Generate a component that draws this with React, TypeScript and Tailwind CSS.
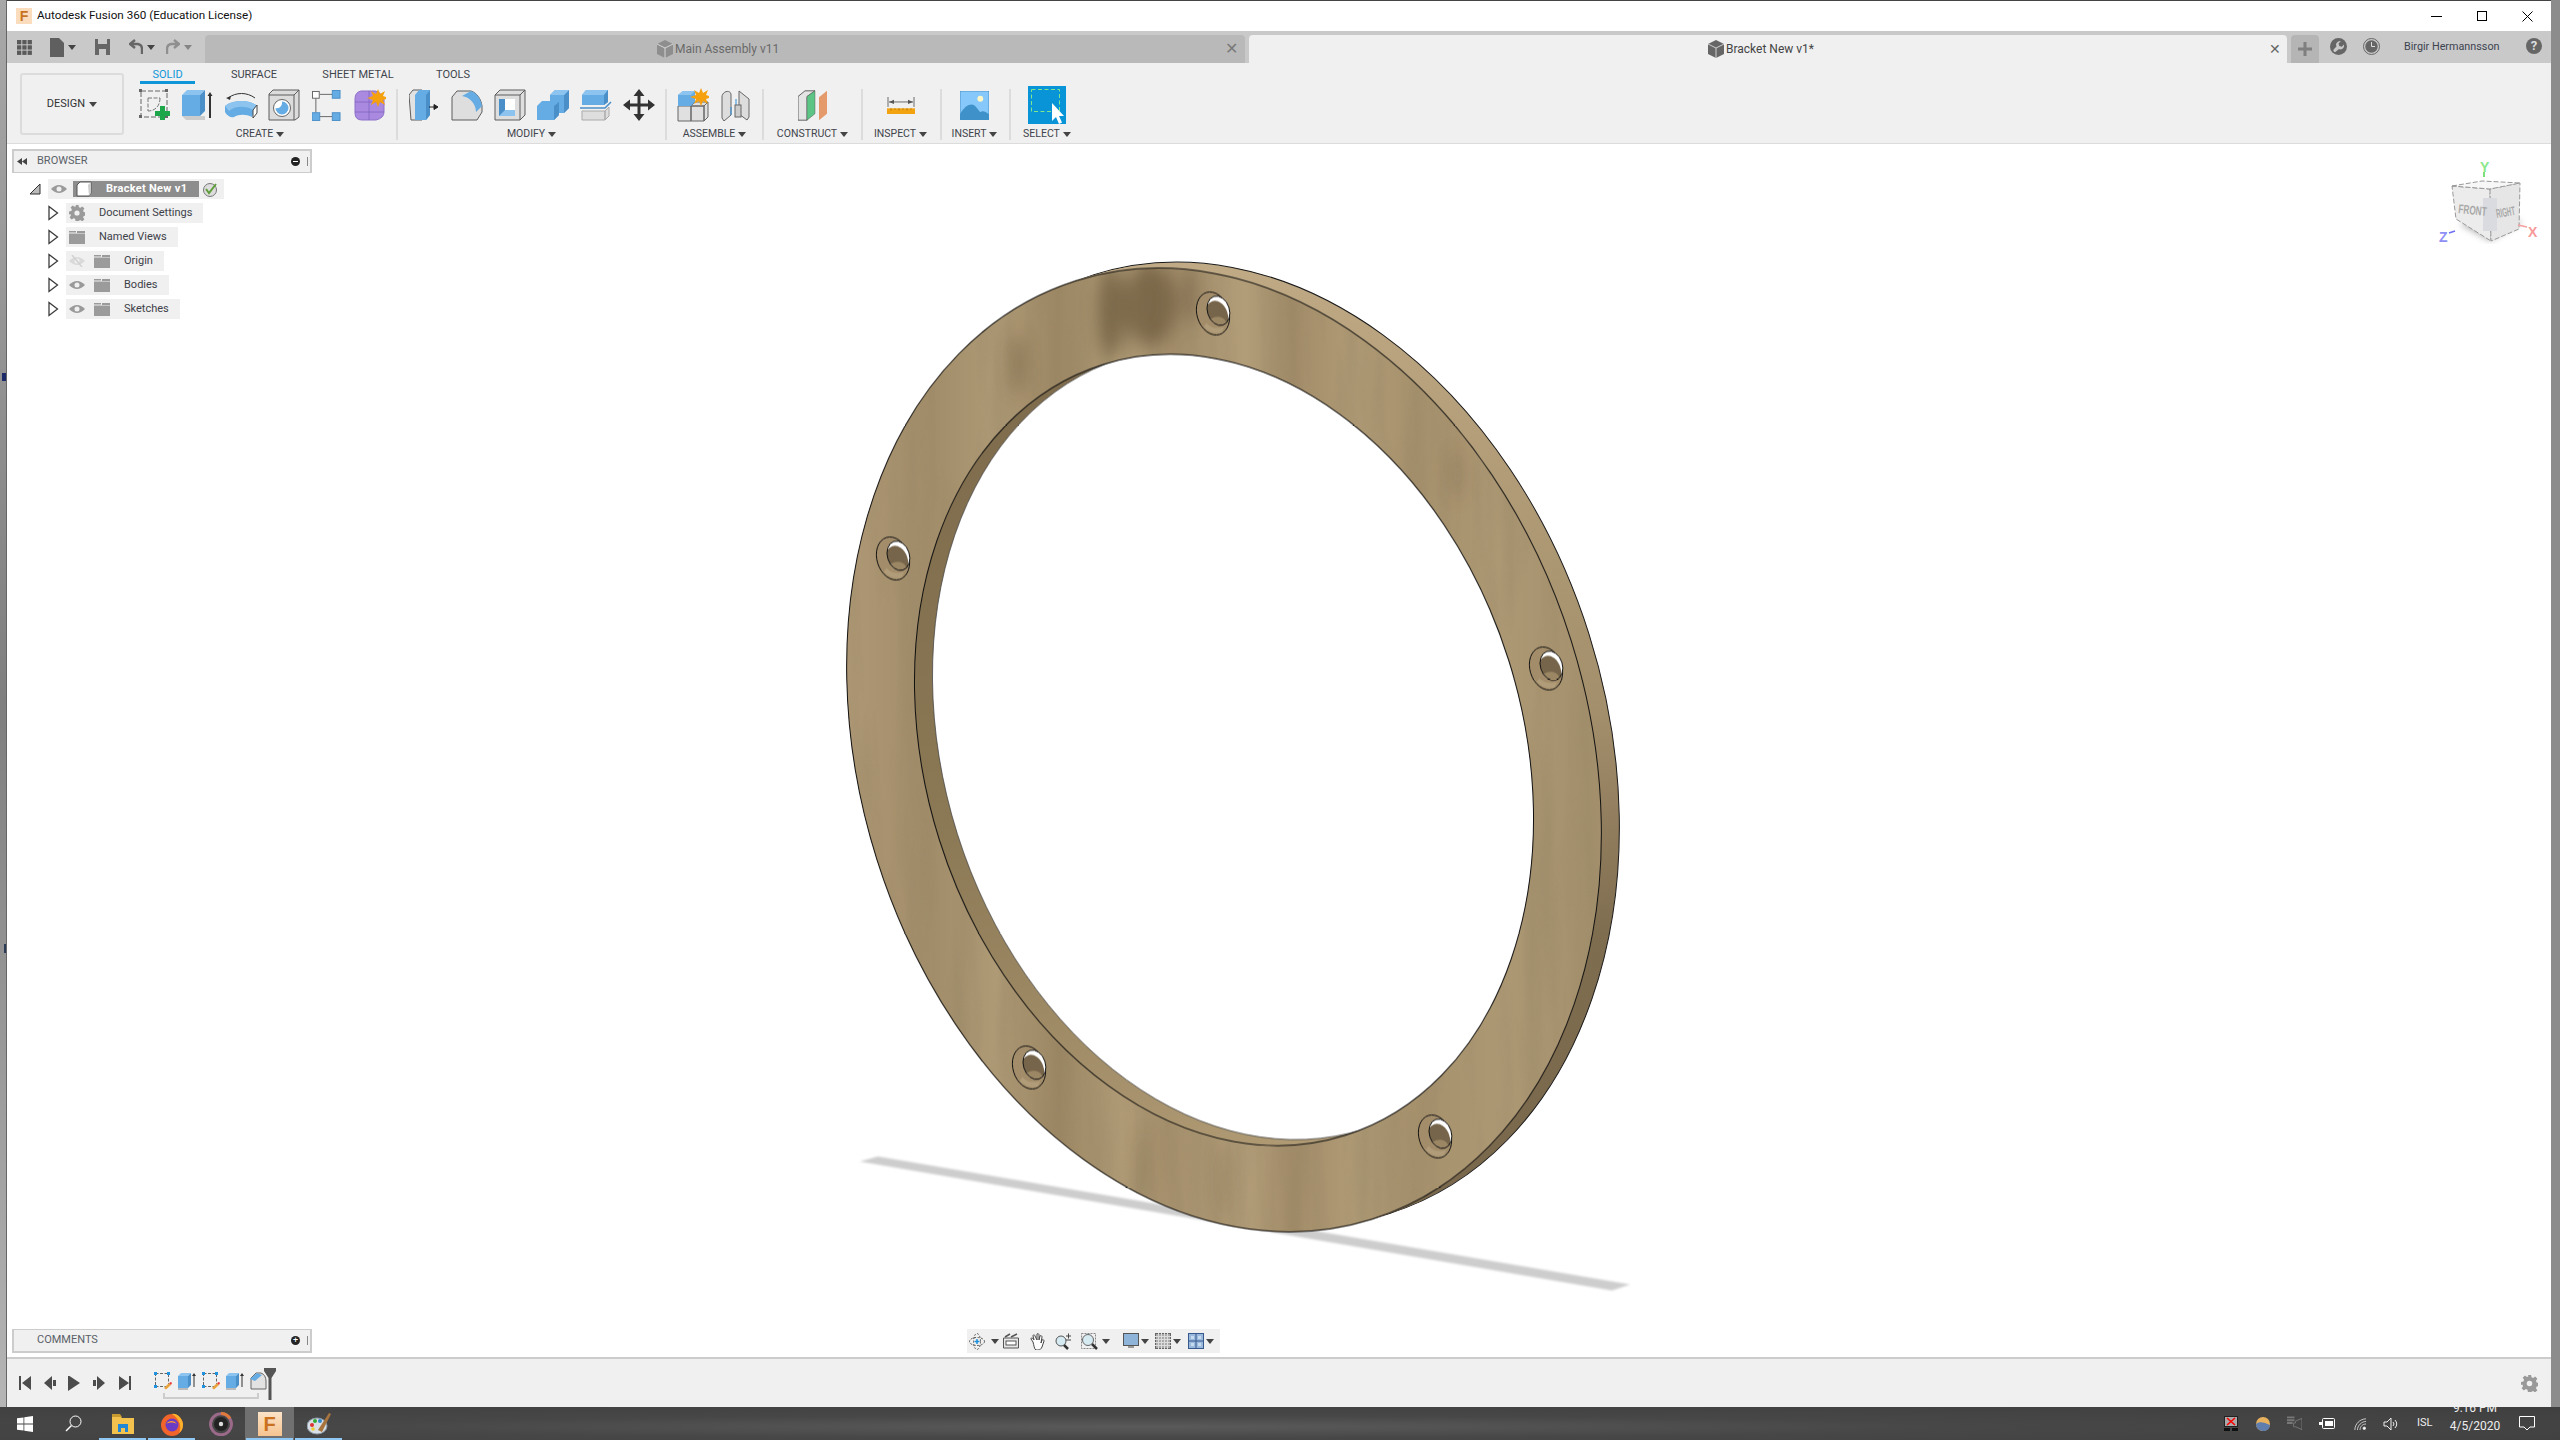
import React from 'react';

const BLUE = '#64ace3';
const BLUE_DK = '#4a8fc8';
const BLUE_LT = '#8cc4ef';
const EDGE = '#5d5d5d';

const Caret = ({ className = '' }: { className?: string }) => (
  <svg width="8" height="5" viewBox="0 0 8 5" className={className}><path d="M0 0h8L4 5z" fill="#444" /></svg>
);

/* ---------- ribbon icons ---------- */
const SketchIcon = () => (
  <svg width="32" height="32" viewBox="0 0 32 32">
    <rect x="2" y="2" width="26" height="26" fill="none" stroke="#666" strokeDasharray="5 2" />
    {[[0, 0], [26, 0], [0, 26], [26, 26]].map(([x, y], i) => <rect key={i} x={x} y={y} width="3" height="3" fill="#666" />)}
    <path d="M9 9h12M9 9v13M21 9c0 8-5 13-12 13" fill="none" stroke="#777" strokeDasharray="4 1.5" />
    <path d="M22 18h5v5h5v5h-5v4h-5v-4h-5v-5h5z" fill="#1ea64b" transform="translate(-1 -1)" />
  </svg>
);
const ExtrudeIcon = () => (
  <svg width="32" height="32" viewBox="0 0 32 32">
    <path d="M0 27l4 4h19v-4z" fill="#ccc" />
    <path d="M0 6h18v21H0z" fill={BLUE} />
    <path d="M0 6l5-5h18l-5 5z" fill={BLUE_LT} />
    <path d="M18 6l5-5v21l-5 5z" fill={BLUE_DK} />
    <path d="M28 3l-2.5 4H27v22h2V7h1.500z" fill="#333" />
  </svg>
);
const RevolveIcon = () => (
  <svg width="34" height="32" viewBox="0 0 34 32">
    <path d="M4 9C12 3 23 3 31 9" fill="none" stroke="#333" />
    <path d="M2 9l5-2-1 4z" fill="#333" />
    <path d="M1 17C8 11 24 10 32 16l-4 12c-6-3-13-3-18 0C7 29 3 27 1 23z" fill={BLUE} />
    <path d="M1 17C8 11 24 10 32 16l-3 5C22 16 10 17 5 22z" fill={BLUE_LT} />
    <path d="M29 21l4-5v8l-4 5z" fill="#fff" stroke="#444" />
  </svg>
);
const HoleIcon = () => (
  <svg width="32" height="32" viewBox="0 0 32 32">
    <path d="M1 5l4-4h26v27l-4 3H1z" fill="#dcdcdc" stroke={EDGE} />
    <path d="M1 6h25v25M26 6l5-5" fill="none" stroke={EDGE} />
    <circle cx="14" cy="19" r="8.500" fill="#fff" stroke="#666" />
    <path d="M14 12.500a6.500 6.500 0 1 1-6.500 6.500c4 1 7-2 6.500-6.500z" fill={BLUE} />
  </svg>
);
const PatternIcon = () => (
  <svg width="29" height="32" viewBox="0 0 30 32">
    <path d="M8 5h13M4 9v15M8 28h13" stroke="#666" fill="none" />
    <rect x="0.500" y="2" width="7" height="7" fill="#fff" stroke="#666" />
    <rect x="21" y="1" width="8" height="8" fill={BLUE} stroke={BLUE_DK} />
    <rect x="0" y="24" width="8" height="8" fill={BLUE} stroke={BLUE_DK} />
    <rect x="21" y="24" width="8" height="8" fill={BLUE} stroke={BLUE_DK} />
  </svg>
);
const Star = ({ x, y }: { x: number; y: number }) => (
  <g transform={`translate(${x} ${y})`}>
    <path d="M0-9l2 5 5-3-2 5 6 2-6 2 2 5-5-3-2 5-2-5-5 3 2-5-6-2 6-2-2-5 5 3z" fill="#f5a10f" />
  </g>
);
const FormIcon = () => (
  <svg width="32" height="34" viewBox="0 0 32 34">
    <path d="M1 11Q1 4 7 3h14q6 1 9 8v13q0 6-8 8H8q-7 0-7-7z" fill="#a98ae0" stroke="#8d70c9" />
    <path d="M1 14h29M15 3v29M1 24h29" stroke="#7d60ba" fill="none" opacity=".7" />
    <Star x={24} y={10} />
  </svg>
);
const PressPullIcon = () => (
  <svg width="30" height="32" viewBox="0 0 30 32">
    <path d="M0 6l4-5h9v30H2z" fill="#e2e2e2" stroke={EDGE} />
    <path d="M6 6l4-5h11v25l-4 5H6z" fill={BLUE} />
    <path d="M17 6l4-5v25l-4 5z" fill={BLUE_DK} />
    <path d="M20 18h8M25 15.500l4 2.500-4 2.500z" stroke="#222" fill="#222" />
  </svg>
);
const FilletIcon = () => (
  <svg width="32" height="32" viewBox="0 0 32 32">
    <path d="M1 8l5-6h14c6 2 10 8 11 15v6l-5 8H1z" fill="#dedede" stroke={EDGE} />
    <path d="M11 7l9-5c6 2 10 8 11 15l-6 6c0-8-6-15-14-16z" fill={BLUE} />
  </svg>
);
const ShellIcon = () => (
  <svg width="32" height="32" viewBox="0 0 32 32">
    <path d="M1 6l5-5h25v25l-5 5H1z" fill="#dedede" stroke={EDGE} />
    <path d="M1 6h25v25M26 6l5-5" fill="none" stroke={EDGE} />
    <path d="M5 10h16v17H5z" fill="#fff" />
    <path d="M5 10h6v11h10v6H5z" fill={BLUE_DK} />
    <path d="M11 21l-6 6h16v-6z" fill={BLUE_LT} />
  </svg>
);
const CombineIcon = () => (
  <svg width="32" height="32" viewBox="0 0 32 32">
    <path d="M13 6l5-5h14v18l-5 5H13z" fill={BLUE} />
    <path d="M0 17l5-5h17v14l-5 5H0z" fill={BLUE} />
    <path d="M27 6l5-5v18l-5 5zM17 17v14l5-5V13z" fill={BLUE_DK} />
    <path d="M13 6l5-5h14l-5 5z" fill={BLUE_LT} />
  </svg>
);
const SplitIcon = () => (
  <svg width="32" height="32" viewBox="0 0 32 32">
    <path d="M2 6l4-5h22v12l-4 3H2z" fill={BLUE} />
    <path d="M2 6l4-5h22l-4 5z" fill={BLUE_LT} />
    <path d="M24 6l4-5v12l-4 3z" fill={BLUE_DK} />
    <path d="M0 19h25l6-6" stroke={BLUE_DK} strokeWidth="1.500" fill="none" />
    <path d="M2 22h23v9H2zM25 22l4-4v9l-4 4z" fill="#dedede" stroke="#aaa" />
  </svg>
);
const MoveIcon = () => (
  <svg width="32" height="32" viewBox="0 0 32 32">
    <path d="M16 0l5.500 7H17.500v7.500H25V10.500l7 5.500-7 5.500V17.500h-7.500V25H21.500L16 32l-5.500-7H14.500v-7.500H7v4L0 16l7-5.500v4h7.500V7H10.500z" fill="#333" />
  </svg>
);
const JointIcon = () => (
  <svg width="30" height="32" viewBox="0 0 30 32">
    <path d="M1 8C1 2 10 0 10 6v20l-7 6-2-3zM18 2l10 8v18l-2 3-8-6z" fill="#ddd" stroke="#666" />
    <path d="M15 10v10M10 18v8" stroke="#2e8fd8" />
    <rect x="14" y="16" width="6" height="12" fill="#ccc" stroke="#666" />
  </svg>
);
const NewCompIcon = () => (
  <svg width="32" height="34" viewBox="0 0 32 34">
    <path d="M1 18h13v15H1zM14 18h13v15H14zM27 18l4-4v15l-4 4zM14 18l4-4h13l-4 4z" fill="#e0e0e0" stroke="#666" />
    <path d="M1 7l5-4h12v11l-4 4H1z" fill={BLUE} />
    <path d="M1 7l5-4h12l-4 4z" fill={BLUE_LT} />
    <Star x={24} y={9} />
  </svg>
);
const PlaneIcon = () => (
  <svg width="30" height="31" viewBox="0 0 30 38" preserveAspectRatio="none">
    <path d="M0 8l7-7h10L9 8v29H0z" fill="#e4e4e4" stroke="#555" />
    <path d="M9 8l8-7v28l-8 8z" fill="#5cc585" stroke="#555" strokeWidth=".5" />
    <path d="M21 9l8-8v28l-8 8z" fill="#e59a6b" />
  </svg>
);
const InspectIcon = () => (
  <svg width="28" height="17" viewBox="0 0 28 24" preserveAspectRatio="none">
    <path d="M1 0v14M27 0v14M2 7h24" stroke="#555" fill="none" />
    <path d="M2 7l5-3v6zM26 7l-5-3v6z" fill="#555" />
    <rect x="0" y="16" width="28" height="8" fill="#f2a30f" />
    <path d="M4 16v3M8 16v2M12 16v3M16 16v2M20 16v3M24 16v2" stroke="#a66f06" />
  </svg>
);
const InsertIcon = () => (
  <svg width="29" height="29" viewBox="0 0 30 30">
    <rect width="30" height="30" fill="#86c8fa" stroke="#4c93c9" />
    <circle cx="21" cy="8" r="3" fill="#fdf7c8" />
    <path d="M0 24c4-7 8-10 12-10s6 5 9 8c2-2 5-1 9 2v6H0z" fill="#3e91c9" />
  </svg>
);
const SelectIcon = () => (
  <svg width="38" height="38" viewBox="0 0 38 38">
    <rect width="38" height="38" fill="#0a94d8" />
    <rect x="3.500" y="3.500" width="28" height="22" fill="none" stroke="#7fe58f" strokeDasharray="4 2.500" />
    <path d="M24 17l12 13h-5l3 6.500-3 1.500-3-7-4 4z" fill="#fff" />
  </svg>
);

/* ---------- small browser / tree icons ---------- */
const Arrow = () => (
  <svg width="11" height="16" viewBox="0 0 11 16" className="ml-[36px] shrink-0">
    <path d="M1 1.500L9.500 8 1 14.500z" fill="#fff" stroke="#3c3c3c" strokeWidth="1.300" />
  </svg>
);
const Eye = ({ off = false }: { off?: boolean }) => (
  <svg width="16" height="12" viewBox="0 0 16 12" className="shrink-0" opacity={off ? 0.25 : 1}>
    <path d="M0 6q8-8 16 0q-8 8-16 0z" fill="#9a9a9a" />
    <circle cx="8" cy="6" r="2.500" fill="#f0f0f0" />
    {off && <path d="M3 0l10 12" stroke="#777" strokeWidth="1.500" />}
  </svg>
);
const Folder = () => (
  <svg width="16" height="13" viewBox="0 0 16 13" className="shrink-0">
    <path d="M0 0h7v1.500H0zM0 2.500h16V13H0z" fill="#9b9b9b" />
    <path d="M8 0h8v2H8z" fill="#9b9b9b" />
  </svg>
);
const Gear = ({ size = 16, color = '#9a9a9a' }: { size?: number; color?: string }) => (
  <svg width={size} height={size} viewBox="0 0 16 16" className="shrink-0">
    <path d="M6.500 0h3l.4 2.200 1.500.6L13.300 1.500l2.100 2.100-1.300 1.900.6 1.500 2.300.5v3l-2.300.4-.6 1.500 1.300 1.900-2.100 2.100-1.900-1.300-1.500.6L9.500 16h-3l-.4-2.200-1.500-.6-1.900 1.300-2.100-2.100 1.300-1.900-.6-1.500L0 9.500v-3l2.300-.5.6-1.500L1.600 2.600 3.700.5l1.900 1.300 1.500-.6z" fill={color} />
    <circle cx="8" cy="8" r="2.600" fill="#f0f0f0" />
  </svg>
);

const TreeRow = ({ icons, label }: { icons: React.ReactNode; label: string }) => (
  <div className="flex items-center h-[20px]">
    <Arrow />
    <div className="ml-[7px] h-full flex items-center bg-[#f0f0f0] pl-[3px] pr-[11px]">
      {icons}
      <span className="text-[11px] text-[#3d4048]">{label}</span>
    </div>
  </div>
);

/* ---------- ring model ---------- */
const TILT = -17.5;
const CX = 1224;
const CY = 750.5;
const OFF_X = 18;
const OFF_Y = -6;

const HOLES = [[1213, 314], [893, 559], [1546, 669], [1029, 1068], [1435, 1137]];

const Hole = ({ x, y, id }: { x: number; y: number; id: string }) => (
  <g transform={`translate(${x} ${y}) rotate(${TILT})`}>
    <clipPath id={id}><ellipse cx="6" cy="-1" rx="11" ry="15" /></clipPath>
    <ellipse rx="16" ry="22" fill="#a28c69" stroke="#111" strokeWidth=".9" />
    <path d="M-13 10q5 10 15 11l5-5q-12 0-16-9z" fill="#b7a27f" opacity=".7" />
    <ellipse cx="6" cy="-1" rx="11" ry="15" fill="#fff" />
    <g clipPath={`url(#${id})`}>
      <ellipse cx="3" cy="3" rx="11" ry="15" fill="#76654a" />
      <ellipse cx="0" cy="12" rx="10" ry="8" fill="#9c8765" />
    </g>
    <ellipse cx="6" cy="-1" rx="11" ry="15" fill="none" stroke="#111" strokeWidth=".9" />
  </g>
);

const Ring = () => (
  <svg viewBox="7 145 2544 1212" className="absolute inset-0 w-full h-full">
    <defs>
      <linearGradient id="wood" gradientUnits="userSpaceOnUse" x1="840" y1="0" x2="1620" y2="0">
        <stop offset="0" stopColor="#ae9875" />
        <stop offset=".12" stopColor="#a28d6a" />
        <stop offset=".2" stopColor="#af9a76" />
        <stop offset=".28" stopColor="#9c8764" />
        <stop offset=".36" stopColor="#b29d78" />
        <stop offset=".42" stopColor="#a6906d" />
        <stop offset=".52" stopColor="#b29d79" />
        <stop offset=".58" stopColor="#a28c69" />
        <stop offset=".66" stopColor="#b09b76" />
        <stop offset=".74" stopColor="#a6916d" />
        <stop offset=".85" stopColor="#ad9874" />
        <stop offset="1" stopColor="#a28e6b" />
      </linearGradient>
      <linearGradient id="side" gradientUnits="userSpaceOnUse" x1="0" y1="260" x2="0" y2="1230">
        <stop offset="0" stopColor="#c0ab86" />
        <stop offset=".3" stopColor="#b29d78" />
        <stop offset=".58" stopColor="#a48f6c" />
        <stop offset=".8" stopColor="#7f6d50" />
        <stop offset="1" stopColor="#7a684c" />
      </linearGradient>
      <filter id="grain" x="0" y="0" width="100%" height="100%">
        <feTurbulence type="fractalNoise" baseFrequency="0.04 0.004" numOctaves="3" seed="7" />
        <feColorMatrix values="0 0 0 0 .28  0 0 0 0 .22  0 0 0 0 .12  2.400 0 0 0 -0.950" />
      </filter>
      <filter id="soft"><feGaussianBlur stdDeviation="9" /></filter>
      <filter id="edge"><feGaussianBlur stdDeviation="1.200" /></filter>
      <clipPath id="faceClip">
        <ellipse cx={CX} cy={CY} rx="364" ry="492" transform={`rotate(${TILT} ${CX} ${CY})`} />
      </clipPath>
      <clipPath id="boreClip">
        <ellipse cx={CX} cy={CY} rx="298.500" ry="404" transform={`rotate(${TILT} ${CX} ${CY})`} />
      </clipPath>
      <linearGradient id="wall" x1="0" y1="0" x2="0" y2="1">
        <stop offset="0" stopColor="#7e6c4d" />
        <stop offset=".5" stopColor="#8c7955" />
        <stop offset="1" stopColor="#b09b75" />
      </linearGradient>
    </defs>

    {/* ground shadow */}
    <path d="M860 1162L878 1157L1630 1285L1612 1291Z" fill="#cdcdcd" filter="url(#edge)" />

    {/* outer side wall */}
    <ellipse cx={CX + OFF_X} cy={CY + OFF_Y} rx="364" ry="492" transform={`rotate(${TILT} ${CX + OFF_X} ${CY + OFF_Y})`} fill="url(#side)" stroke="#1a1a1a" />
    {[0.2, 0.4, 0.6, 0.8].map((t) => (
      <ellipse key={t} cx={CX + OFF_X * t} cy={CY + OFF_Y * t} rx="364" ry="492" transform={`rotate(${TILT} ${CX + OFF_X * t} ${CY + OFF_Y * t})`} fill="url(#side)" />
    ))}
    {/* front face */}
    <ellipse cx={CX} cy={CY} rx="364" ry="492" transform={`rotate(${TILT} ${CX} ${CY})`} fill="#a58f6c" />
    <g clipPath="url(#faceClip)">
      <rect x="840" y="255" width="790" height="985" fill="url(#wood)" />
      <rect x="840" y="255" width="790" height="985" filter="url(#grain)" opacity=".3" />
      <g filter="url(#soft)" fill="#5f4d33" opacity=".6">
        <ellipse cx="1112" cy="312" rx="14" ry="46" />
        <ellipse cx="1150" cy="305" rx="26" ry="42" />
        <ellipse cx="1190" cy="295" rx="10" ry="30" opacity=".6" />
        <ellipse cx="1018" cy="365" rx="5" ry="30" />
        <ellipse cx="1457" cy="475" rx="4" ry="26" opacity=".6" />
        <ellipse cx="1225" cy="1180" rx="5" ry="40" opacity=".5" />
        <ellipse cx="1145" cy="1170" rx="5" ry="40" opacity=".4" />
      </g>
    </g>
    <ellipse cx={CX} cy={CY} rx="364" ry="492" transform={`rotate(${TILT} ${CX} ${CY})`} fill="none" stroke="#111" />
    {/* bore */}
    <ellipse cx={CX} cy={CY} rx="298.500" ry="404" transform={`rotate(${TILT} ${CX} ${CY})`} fill="url(#wall)" />
    <g clipPath="url(#boreClip)">
      <ellipse cx={CX + OFF_X} cy={CY + OFF_Y} rx="298.500" ry="404" transform={`rotate(${TILT} ${CX + OFF_X} ${CY + OFF_Y})`} fill="#fff" stroke="#444" strokeWidth=".7" />
    </g>
    <ellipse cx={CX} cy={CY} rx="298.500" ry="404" transform={`rotate(${TILT} ${CX} ${CY})`} fill="none" stroke="#111" />
    {HOLES.map(([x, y], i) => <Hole key={i} x={x} y={y} id={`hole${i}`} />)}
  </svg>
);

const ViewCube = () => (
  <svg width="100" height="92" viewBox="0 0 100 92" className="absolute right-[12px] top-[14px]">
    <defs><filter id="cubeShadow"><feGaussianBlur stdDeviation="3" /></filter></defs>
    <path d="M20 66l31 17 33-19-30 -6z" fill="#9a9a9a" opacity=".7" filter="url(#cubeShadow)" />
    <path d="M13 28l38 3 1 52-35-22z" fill="#ececec" stroke="#999" strokeDasharray="5 2" />
    <path d="M51 31l30-6-1 46-28 12z" fill="#e6e6e6" stroke="#999" strokeDasharray="5 2" />
    <path d="M13 28l30-5 38 2-30 6z" fill="#f7f7f7" stroke="#999" strokeDasharray="5 2" />
    <rect x="44" y="40" width="14" height="33" fill="#d9dbe0" />
    <text fontSize="11" fontWeight="700" fill="#a8a8a8" fontFamily="Liberation Sans" transform="translate(19 55) rotate(6) scale(.75 1.15)">FRONT</text>
    <text fontSize="11" fontWeight="700" fill="#a8a8a8" fontFamily="Liberation Sans" transform="translate(58 60) rotate(-10) scale(.55 1.15)">RIGHT</text>
    <path d="M45 19v-5" stroke="#7be07b" strokeWidth="2" />
    <text x="41" y="14" fontSize="14" fontWeight="700" fill="#8be88b" fontFamily="Liberation Sans">Y</text>
    <path d="M79 67l9 2" stroke="#f7a0a0" strokeWidth="1.500" />
    <text x="89" y="79" fontSize="14" fontWeight="700" fill="#f79a9a" fontFamily="Liberation Sans">X</text>
    <path d="M10 75l6-2" stroke="#6f6ff0" strokeWidth="1.500" />
    <text x="0" y="84" fontSize="14" fontWeight="700" fill="#8f8ff5" fontFamily="Liberation Sans">Z</text>
  </svg>
);

/* ---------- ribbon ---------- */
const Cell = ({ children }: { children: React.ReactNode }) => (
  <div className="w-[43px] flex items-center justify-center">{children}</div>
);
const Label = ({ text }: { text: string }) => (
  <div className="h-[12px] mt-[2px] flex items-center justify-center gap-[3px] text-[10.5px] leading-none text-[#3f444c]">
    {text}<Caret />
  </div>
);
const Sep = () => <div className="w-[2px] h-[51px] mt-[5px] bg-[#dcdcdc] shrink-0" />;

const Ribbon = () => (
  <div className="flex h-[81px] shrink-0 bg-[#f0f0f0] border-b border-[#dcdcdc] font-['Roboto',sans-serif]">
    <div className="ml-[13px] mt-[10px] w-[104px] h-[62px] rounded-[3px] border-2 border-[#dcdcdc] flex items-center justify-center gap-[4px] text-[11px] text-[#333]">
      DESIGN<Caret />
    </div>
    <div className="flex flex-col">
      <div className="h-[21px] flex pl-[16px] text-[11px] text-[#3f444c]">
        <div className="w-[55px] h-[21px] pt-[4px] text-center text-[#0f96d8] border-b-[3px] border-[#0f96d8]">SOLID</div>
        <div className="ml-[31px] w-[56px] pt-[4px] text-center">SURFACE</div>
        <div className="ml-[36px] w-[80px] pt-[4px] text-center">SHEET METAL</div>
        <div className="ml-[30px] w-[50px] pt-[4px] text-center">TOOLS</div>
      </div>
      <div className="flex h-[56px]">
        <div className="w-[272px] flex flex-col">
          <div className="h-[44px] pl-[9px] flex">
            <Cell><SketchIcon /></Cell><Cell><ExtrudeIcon /></Cell><Cell><RevolveIcon /></Cell>
            <Cell><HoleIcon /></Cell><Cell><PatternIcon /></Cell><Cell><FormIcon /></Cell>
          </div>
          <Label text="CREATE" />
        </div>
        <Sep />
        <div className="w-[267px] flex flex-col">
          <div className="h-[44px] pl-[4px] flex">
            <Cell><PressPullIcon /></Cell><Cell><FilletIcon /></Cell><Cell><ShellIcon /></Cell>
            <Cell><CombineIcon /></Cell><Cell><SplitIcon /></Cell><Cell><MoveIcon /></Cell>
          </div>
          <Label text="MODIFY" />
        </div>
        <Sep />
        <div className="w-[95px] flex flex-col">
          <div className="h-[44px] pl-[4px] flex"><Cell><NewCompIcon /></Cell><Cell><JointIcon /></Cell></div>
          <Label text="ASSEMBLE" />
        </div>
        <Sep />
        <div className="w-[97px] flex flex-col">
          <div className="h-[44px] flex justify-center items-center"><PlaneIcon /></div>
          <Label text="CONSTRUCT" />
        </div>
        <Sep />
        <div className="w-[75px] flex flex-col">
          <div className="h-[44px] flex justify-center items-center"><InspectIcon /></div>
          <Label text="INSPECT" />
        </div>
        <div className="w-[2px]" />
        <Sep />
        <div className="w-[65px] flex flex-col">
          <div className="h-[44px] flex justify-center items-center"><InsertIcon /></div>
          <Label text="INSERT" />
        </div>
        <div className="w-[2px]" />
        <Sep />
        <div className="w-[72px] flex flex-col">
          <div className="h-[44px] flex justify-center items-center"><SelectIcon /></div>
          <Label text="SELECT" />
        </div>
      </div>
    </div>
  </div>
);

/* ---------- tab bar ---------- */
const TabCube = ({ color }: { color: string }) => (
  <svg width="16" height="18" viewBox="0 0 16 18" className="shrink-0">
    <path d="M0 4l8-4 8 4v10l-8 4-8-4z" fill={color} />
    <path d="M0 4l8 4 8-4M8 8v10" stroke="#e8e8e8" strokeWidth=".8" fill="none" />
  </svg>
);

const TabBar = () => (
  <div className="flex h-[32px] shrink-0 bg-[#c9c9c9] font-['Roboto',sans-serif]">
    <div className="w-[198px] flex items-center shrink-0">
      <svg width="15" height="15" viewBox="0 0 15 15" className="ml-[10px]" fill="#5a5a5a">
        {[0, 5.3, 10.6].flatMap((x) => [0, 5.3, 10.6].map((y) => <rect key={`${x}${y}`} x={x} y={y} width="4.300" height="4.300" />))}
      </svg>
      <svg width="14" height="19" viewBox="0 0 14 19" className="ml-[18px]"><path d="M0 0h9l5 5v14H0z" fill="#5f5f5f" /></svg>
      <Caret className="ml-[4px]" />
      <svg width="15" height="16" viewBox="0 0 15 16" className="ml-[19px]">
        <path d="M0 0h15v16H0z" fill="#666" />
        <path d="M3 0h9v5H3zM4 10h7v6H4z" fill="#c9c9c9" />
      </svg>
      <svg width="14" height="16" viewBox="0 0 14 16" className="ml-[19px]">
        <path d="M6 1L1 5l5 4M1 5h8q4 1 4 5v5" fill="none" stroke="#666" strokeWidth="2.400" />
      </svg>
      <Caret className="ml-[4px]" />
      <svg width="14" height="16" viewBox="0 0 14 16" className="ml-[11px]">
        <path d="M8 1l5 4-5 4M13 5H5q-4 1-4 5v5" fill="none" stroke="#8f8f8f" strokeWidth="2.400" />
      </svg>
      <Caret className="ml-[4px] opacity-50" />
    </div>
    <div className="mt-[4px] w-[1040px] flex items-center bg-[#b9b9b9] rounded-t-[4px] text-[12px] text-[#6a6a6a]">
      <div className="ml-[452px]"><TabCube color="#8e8e8e" /></div>
      <span className="ml-[2px]">Main Assembly v11</span>
      <span className="ml-auto mr-[7px] text-[#7a7a7a] text-[16px] leading-none">✕</span>
    </div>
    <div className="ml-[4px] mt-[4px] w-[1038px] flex items-center bg-[#f0f0f0] rounded-t-[4px] text-[12px] text-[#444]">
      <div className="ml-[459px]"><TabCube color="#666" /></div>
      <span className="ml-[2px]">Bracket New v1*</span>
      <span className="ml-auto mr-[6px] text-[#666] text-[14px] leading-none">✕</span>
    </div>
    <div className="ml-[4px] mt-[4px] w-[28px] h-[28px] rounded-t-[4px] bg-[#b5b5b5] flex items-center justify-center">
      <svg width="14" height="14" viewBox="0 0 14 14"><path d="M5.500 0h3v5.500H14v3H8.500V14h-3V8.500H0v-3h5.500z" fill="#7f7f7f" /></svg>
    </div>
    <svg width="17" height="17" viewBox="0 0 17 17" className="ml-[11px] mt-[7px]">
      <circle cx="8.500" cy="8.500" r="8.500" fill="#666" />
      <path d="M11 3l-2.500 2.500.8 2.500 2.500.8L14 6.500q.5 3-2 4.500-2 .8-3 0L6 13.500q-1 1-2.200 0-1-1.200 0-2.200L6.500 8.500q-1-2 0-3.500Q8 2.800 11 3z" fill="#c9c9c9" />
    </svg>
    <svg width="17" height="17" viewBox="0 0 17 17" className="ml-[16px] mt-[7px]">
      <circle cx="8.500" cy="8.500" r="8" fill="none" stroke="#666" />
      <circle cx="8.500" cy="8.500" r="6.200" fill="#666" />
      <path d="M8.500 4v4.500h3.500" fill="none" stroke="#ddd" />
    </svg>
    <span className="ml-[24px] mt-[7px] text-[10.8px] leading-[17px] text-[#3c4450]">Birgir Hermannsson</span>
    <div className="ml-auto mr-[9px] mt-[7px] w-[16px] h-[16px] rounded-full bg-[#666] text-[#ddd] text-[13px] leading-[16px] font-bold text-center">?</div>
  </div>
);

/* ---------- navigation bar + timeline ---------- */
const NavBar = () => (
  <div className="absolute left-[960px] bottom-[4px] w-[253px] h-[24px] bg-[#f0f0f0] flex items-center">
    <svg width="17" height="17" viewBox="0 0 17 17" className="ml-[2px]">
      <ellipse cx="8" cy="8.500" rx="7.500" ry="4" fill="none" stroke="#555" strokeDasharray="2 1.500" />
      <ellipse cx="8" cy="8.500" rx="3.500" ry="8" fill="none" stroke="#555" strokeDasharray="2 1.500" />
      <path d="M5.500 8.500h5M8 6v5" stroke="#1c8fdc" strokeWidth="1.500" />
    </svg>
    <Caret className="ml-[5px]" />
    <svg width="16" height="16" viewBox="0 0 16 16" className="ml-[4px]">
      <path d="M.5 5h15v10H.5z" fill="#e6e6e6" stroke="#555" /><rect x="3" y="8" width="10" height="4" fill="#fff" stroke="#555" /><path d="M2 4l5-3M8 4l6-3" stroke="#555" strokeWidth="1.500" />
    </svg>
    <svg width="17" height="17" viewBox="0 0 17 17" className="ml-[10px]">
      <path d="M4 9L2 6c0-2 2-1 3 1L4 3c0-2 2-1 2 0l2 4V1c1-1 2 0 2 1v5l1-4c1-1 2 0 2 1l-1 6 1-3c1-1 2 0 2 1l-2 6c-1 2-2 3-4 3H7C5 16 5 12 4 9z" fill="#fff" stroke="#444" />
    </svg>
    <svg width="17" height="17" viewBox="0 0 17 17" className="ml-[9px]">
      <circle cx="6" cy="8" r="5" fill="#d6eaf2" stroke="#555" /><path d="M9 12l4 4" stroke="#333" strokeWidth="2.500" /><path d="M11 3h5M13.500 .5v5M11 7h5" stroke="#444" />
    </svg>
    <svg width="17" height="17" viewBox="0 0 17 17" className="ml-[9px]">
      <rect x=".5" y=".5" width="14" height="15" fill="none" stroke="#888" strokeDasharray="2 1" /><circle cx="7" cy="7" r="5.500" fill="#d6eaf2" stroke="#666" /><path d="M11 11l5 5" stroke="#333" strokeWidth="2.500" />
    </svg>
    <Caret className="ml-[4px]" />
    <svg width="16" height="16" viewBox="0 0 16 16" className="ml-[13px]">
      <rect x=".5" y=".5" width="15" height="12" fill="#8fb4d9" stroke="#555" /><path d="M5 13h6v2H5z" fill="#999" />
    </svg>
    <Caret className="ml-[2px]" />
    <svg width="16" height="16" viewBox="0 0 16 16" className="ml-[6px]">
      <rect x=".5" y=".5" width="15" height="15" fill="#aaa" stroke="#666" /><path d="M3.500 0v16M6.500 0v16M9.500 0v16M12.500 0v16M0 3.500h16M0 6.500h16M0 9.500h16M0 12.500h16" stroke="#ddd" />
    </svg>
    <Caret className="ml-[2px]" />
    <svg width="16" height="16" viewBox="0 0 16 16" className="ml-[7px]">
      <rect x=".5" y=".5" width="15" height="15" fill="#9ab9dc" stroke="#37598c" /><path d="M8 0v16M0 8h16" stroke="#37598c" /><path d="M3 3h3v3H3zM10 3h3v3h-3zM3 10h3v3H3zM10 10h3v3h-3z" fill="#c7dbef" />
    </svg>
    <Caret className="ml-[2px]" />
  </div>
);

const TinySketch = () => (
  <svg width="18" height="18" viewBox="0 0 18 18">
    <rect x="1.500" y="1.500" width="13" height="13" fill="none" stroke="#666" strokeDasharray="3 1.500" />
    <path d="M0 0h3v3H0zM13 0h3v3h-3zM0 13h3v3H0z" fill="#1f93e0" />
    <path d="M10 16l5-5 2 2-5 4.500z" fill="#e8a33c" /><path d="M15 11l2 2 1-2-1-1z" fill="#e33" />
  </svg>
);
const TinyExtrude = () => (
  <svg width="18" height="18" viewBox="0 0 18 18">
    <path d="M0 4h10v12H0z" fill={BLUE} /><path d="M0 4l3-3h10l-3 3z" fill={BLUE_LT} /><path d="M10 4l3-3v12l-3 3z" fill={BLUE_DK} />
    <path d="M0 16h10v2H0z" fill="#bbb" /><path d="M16 1l-2 3h1.500v11h1V4H18z" fill="#333" />
  </svg>
);
const TinyFillet = () => (
  <svg width="17" height="18" viewBox="0 0 17 18">
    <path d="M1 6l5-5h5c3 1 5 4 5 8v8H1z" fill="#e2e2e2" stroke="#666" />
    <path d="M0 7l7-6 5 2-7 6z" fill={BLUE} />
  </svg>
);

const Timeline = () => (
  <div className="h-[50px] shrink-0 bg-[#f0f0f0] border-t-2 border-[#ccc] flex items-center relative">
    <svg width="122" height="15" viewBox="0 0 122 15" className="ml-[12px]" fill="#4c4c4c">
      <path d="M0 0h2v14H0zM12 0v14L3 7z" />
      <path d="M33 0v14l-8-7zM34 4h3v6h-3z" />
      <path d="M49 -1v16l12-8z" />
      <path d="M74 4h3v6h-3zM78 0v14l8-7z" />
      <path d="M100 0l10 7-10 7zM110 0h2v14h-2z" />
    </svg>
    <div className="ml-[13px] flex gap-[6px] items-center -mt-[4px]">
      <TinySketch /><TinyExtrude /><TinySketch /><TinyExtrude /><TinyFillet />
    </div>
    <div className="absolute left-[156px] top-[34px] w-[96px] h-[6px] border-2 border-t-0 border-[#ccc]" />
    <svg width="14" height="34" viewBox="0 0 14 34" className="absolute left-[257px] top-[9px]">
      <path d="M0 0h12v3L7.500 10v22h-3V10L0 3z" fill="#555" />
    </svg>
    <div className="ml-auto mr-[13px]"><Gear size={17} color="#999" /></div>
  </div>
);

/* ---------- taskbar ---------- */
const TaskSlot = ({ children, active = false, bar = true }: { children: React.ReactNode; active?: boolean; bar?: boolean }) => (
  <div className={`relative w-[49px] h-[33px] flex items-center justify-center ${active ? 'bg-[#707070]' : ''}`}>
    {children}
    {bar && <div className="absolute left-[1px] right-[1px] bottom-0 h-[2px] bg-[#8fc8f4]" />}
  </div>
);

const Taskbar = () => (
  <div className="h-[33px] shrink-0 flex items-center overflow-hidden bg-[#4b4b4b] bg-[radial-gradient(ellipse_at_45%_60%,#5a5a5a,#474747_40%,#3f3f3f)] font-['Roboto',sans-serif] text-[#eee]">
    <TaskSlot bar={false}>
      <svg width="16" height="16" viewBox="0 0 16 16" fill="#fff"><path d="M0 2.300l6.500-.9v6.200H0zM7.300 1.300L16 0v7.600H7.300zM0 8.400h6.500v6.200L0 13.700zM7.300 8.400H16V16l-8.700-1.300z" /></svg>
    </TaskSlot>
    <TaskSlot bar={false}>
      <svg width="17" height="17" viewBox="0 0 17 17" fill="none" stroke="#fff"><circle cx="10.500" cy="6.500" r="5.500" /><path d="M6.500 10.500L1 16" strokeWidth="1.500" /></svg>
    </TaskSlot>
    <TaskSlot>
      <svg width="22" height="20" viewBox="0 0 22 20"><path d="M0 2h8l2 2h12v16H0z" fill="#f2c14e" /><path d="M0 0h8l2 3H0z" fill="#c69a2e" /><path d="M6 10h10v8h-3v-4H9v4H6z" fill="#1f87d6" /></svg>
    </TaskSlot>
    <TaskSlot>
      <svg width="24" height="24" viewBox="0 0 24 24">
        <circle cx="12" cy="13" r="11" fill="#f1642a" /><path d="M12 2c5-1 10 4 11 10 0 4-1 7-4 9 3-6 1-14-7-19z" fill="#fcb32b" />
        <circle cx="12" cy="13" r="6.500" fill="#6a3bc4" /><path d="M6 12c3-4 8-4 11 0-3-2-8-2-11 0z" fill="#ff9a2e" />
      </svg>
    </TaskSlot>
    <TaskSlot bar={false}>
      <svg width="24" height="24" viewBox="0 0 24 24" fill="none">
        <path d="M4 19a10.500 10.500 0 1 1 16 0 10.500 10.500 0 0 1-16 0z" stroke="#9b6a8a" strokeWidth="3" />
        <path d="M12 1.500a10.500 10.500 0 0 1 9 5" stroke="#e07a3a" strokeWidth="3" />
        <circle cx="12" cy="12" r="7" fill="#222" /><circle cx="12" cy="12" r="2.200" fill="#ddd" />
      </svg>
    </TaskSlot>
    <TaskSlot active>
      <div className="w-[24px] h-[24px] bg-gradient-to-b from-[#fbe3c8] to-[#f6c48f] flex items-center justify-center text-[#c9711f] text-[20px] font-bold leading-none font-['Liberation_Sans',sans-serif]">F</div>
    </TaskSlot>
    <TaskSlot>
      <svg width="24" height="22" viewBox="0 0 24 22">
        <ellipse cx="10" cy="13" rx="10" ry="8" fill="#d9dfe6" stroke="#8b9aa8" />
        <circle cx="5" cy="12" r="2" fill="#d33" /><circle cx="8" cy="8" r="2" fill="#3a3" /><circle cx="13" cy="8" r="2" fill="#38c" /><circle cx="6" cy="16" r="1.800" fill="#ec3" />
        <path d="M11 17L22 0l2 1-9 18z" fill="#a8743d" />
      </svg>
    </TaskSlot>

    <div className="ml-auto flex items-center">
      <svg width="14" height="15" viewBox="0 0 14 15" className="mr-[18px]">
        <rect x=".5" y=".5" width="13" height="10" fill="#aaa" stroke="#222" /><path d="M3 2l8 7M11 2L3 9" stroke="#f00" strokeWidth="1.600" /><path d="M0 12h6v3H0zM8 12h6v3H8z" fill="#111" />
      </svg>
      <svg width="14" height="14" viewBox="0 0 14 14" className="mr-[17px]">
        <circle cx="7" cy="7" r="7" fill="#e8b15d" /><path d="M0 7c3-3 8-2 14 1-.5 4-3 6-7 6S0 11 0 7z" fill="#5f7eae" />
      </svg>
      <svg width="15" height="15" viewBox="0 0 16 15" className="mr-[17px]">
        <path d="M0 0h8v2H0zM0 3h8v2H0zM0 6h6v2H0z" fill="#777" /><path d="M9 5l7-3v12l-7-3H7V7h2z" fill="none" stroke="#777" />
      </svg>
      <svg width="16" height="11" viewBox="0 0 16 11" className="mr-[19px]">
        <rect x="3.500" y=".5" width="12" height="10" rx="1" fill="none" stroke="#fff" /><rect x="6" y="3" width="8" height="5" fill="#fff" /><path d="M0 4h3v3H0z" fill="#fff" />
      </svg>
      <svg width="12" height="12" viewBox="0 0 14 14" fill="none" stroke="#ddd" className="mr-[17px]">
        <path d="M1 14C1 7 7 1 14 1M4 14c0-5 5-10 10-10M7 14c0-4 3-7 7-7" /><circle cx="12" cy="12" r="1.500" fill="#fff" />
      </svg>
      <svg width="16" height="14" viewBox="0 0 16 14" fill="none" stroke="#eee" className="mr-[18px]">
        <path d="M1 5h3l4-4v12l-4-4H1zM10 5q2 2 0 4M12 3q3.500 4 0 8" />
      </svg>
      <span className="text-[11px] w-[15px] whitespace-nowrap mr-[20px]">ISL</span>
      <div className="w-[46px] flex flex-col items-center whitespace-nowrap text-[12px] leading-[18px] -mt-[14px] mr-[21px]">
        <span>9:16 PM</span>
        <span>4/5/2020</span>
      </div>
      <svg width="16" height="15" viewBox="0 0 16 15" fill="none" stroke="#fff" className="mr-[25px]">
        <path d="M.5.500h15v10.500H11L8 14l-3-3H.5z" />
      </svg>
    </div>
  </div>
);

export default function App() {
  return (
    <div className="w-[2560px] h-[1440px] flex flex-col overflow-hidden bg-[#8a8a8a]">
      <div className="flex-1 flex min-h-0">
        {/* desktop showing beside the window */}
        <div className="w-[7px] shrink-0 border-r border-[#666] bg-gradient-to-b from-[#a8a8a8] via-[#7f7f7f] to-[#b5b5b5] flex flex-col">
          <div className="mt-[373px] ml-[2px] w-[4px] h-[8px] bg-[#1c2a6a]" />
          <div className="mt-[563px] ml-[4px] w-[2px] h-[9px] bg-[#2b3a55]" />
        </div>
        <div className="flex-1 flex flex-col min-w-0 border-t border-[#444] font-['Roboto',sans-serif]">
          {/* Title bar */}
          <div className="h-[30px] shrink-0 bg-white flex items-center">
            <div className="ml-[9px] w-[16px] h-[16px] bg-[#fbdcbc] flex items-center justify-center text-[#c8741f] text-[14px] font-bold leading-none font-['Liberation_Sans',sans-serif]">F</div>
            <span className="ml-[5px] text-[11.7px] text-[#111]">Autodesk Fusion 360 (Education License)</span>
            <div className="ml-auto flex items-center">
              <div className="w-[11px] h-[1px] bg-black mr-[35px]" />
              <div className="w-[10px] h-[10px] border border-black mr-[35px]" />
              <svg width="11" height="11" viewBox="0 0 11 11" className="mr-[18px]"><path d="M.5.500l10 10M10.500.500l-10 10" stroke="#000" /></svg>
            </div>
          </div>
          <TabBar />
          <Ribbon />

          {/* Canvas */}
          <div className="flex-1 relative bg-white min-h-0 overflow-hidden">
            <Ring />
            <ViewCube />

            <div className="absolute left-[5px] top-[5px] w-[300px]">
              <div className="h-[24px] bg-[#f0f0f0] border-2 border-[#ccc] border-b-[1px] flex items-center text-[11px] text-[#5a6068]">
                <svg width="10" height="7" viewBox="0 0 10 7" className="ml-[3px]"><path d="M5 0v7L0 3.500zM10 0v7L5 3.500z" fill="#444" /></svg>
                <span className="ml-[10px]">BROWSER</span>
                <div className="ml-auto w-[9px] h-[9px] rounded-full bg-[#222] flex items-center justify-center"><div className="w-[5px] h-[1px] bg-white" /></div>
                <div className="ml-[7px] mr-[1px] w-[2px] h-[9px] border-l border-[#888]" />
              </div>
              <div className="mt-[6px] flex flex-col gap-[4px]">
                <div className="flex items-center h-[20px]">
                  <svg width="12" height="12" viewBox="0 0 12 12" className="ml-[17px] shrink-0"><path d="M11 1v10H1z" fill="#bbb" stroke="#333" /></svg>
                  <div className="ml-[7px] w-[176px] h-full flex items-center bg-[#f0f0f0]">
                    <div className="ml-[3px]"><Eye /></div>
                    <div className="ml-[6px] w-[126px] h-[16px] bg-[#8d8d8d] flex items-center">
                      <svg width="16" height="16" viewBox="0 0 16 16" className="ml-[3px]"><path d="M1 4l3-3h11v11l-2 3H1z" fill="#fff" stroke="#555" /><path d="M12 4l3-3v11l-2 3z" fill="#ccc" /></svg>
                      <span className="ml-[14px] text-[11px] text-white font-bold tracking-[0.3px]">Bracket New v1</span>
                    </div>
                    <svg width="16" height="16" viewBox="0 0 16 16" className="ml-[3px]">
                      <circle cx="8" cy="9" r="6.500" fill="#ddd" stroke="#777" /><path d="M4 8l3 4 7-9" fill="none" stroke="#5f9e3a" strokeWidth="2" />
                    </svg>
                  </div>
                </div>
                <TreeRow label="Document Settings" icons={<><Gear /><span className="w-[14px]" /></>} />
                <TreeRow label="Named Views" icons={<><Folder /><span className="w-[14px]" /></>} />
                <TreeRow label="Origin" icons={<><Eye off /><span className="w-[9px]" /><Folder /><span className="w-[14px]" /></>} />
                <TreeRow label="Bodies" icons={<><Eye /><span className="w-[9px]" /><Folder /><span className="w-[14px]" /></>} />
                <TreeRow label="Sketches" icons={<><Eye /><span className="w-[9px]" /><Folder /><span className="w-[14px]" /></>} />
              </div>
            </div>

            <div className="absolute left-[5px] bottom-[4px] w-[300px] h-[24px] bg-[#f0f0f0] border-2 border-t-[1px] border-[#ccc] flex items-center text-[11px] text-[#5a6068]">
              <span className="ml-[23px]">COMMENTS</span>
              <div className="ml-auto w-[9px] h-[9px] rounded-full bg-[#222] text-white text-[9px] leading-[9px] text-center">+</div>
              <div className="ml-[7px] mr-[1px] w-[2px] h-[9px] border-l border-[#888]" />
            </div>

            <NavBar />
          </div>

          <Timeline />
        </div>
        <div className="w-[9px] bg-[#8c8c8c] shrink-0" />
      </div>
      <Taskbar />
    </div>
  );
}
